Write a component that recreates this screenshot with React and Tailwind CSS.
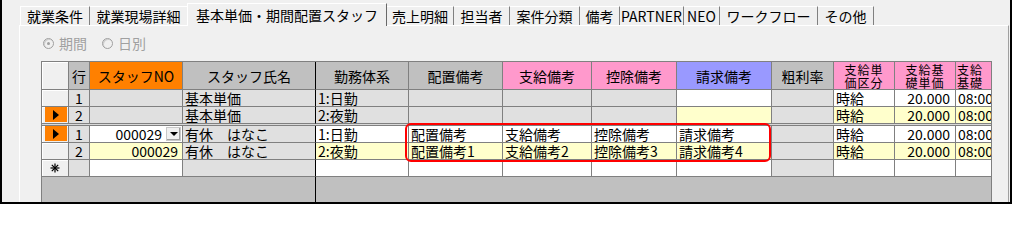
import React from 'react';

const FONT = { fontFamily: '"Noto Sans CJK JP", "Noto Sans", sans-serif' };

const tabs = [
  { label: '就業条件', w: 'w-[70px]', first: true },
  { label: '就業現場詳細', w: 'w-[97px]', noSep: true },
  { label: '基本単価・期間配置スタッフ', w: 'w-[200px]', active: true },
  { label: '売上明細', w: 'w-[67px]' },
  { label: '担当者', w: 'w-[56px]' },
  { label: '案件分類', w: 'w-[70px]' },
  { label: '備考', w: 'w-[40px]' },
  { label: 'PARTNER', w: 'w-[64px]' },
  { label: 'NEO', w: 'w-[36px]' },
  { label: 'ワークフロー', w: 'w-[98px]' },
  { label: 'その他', w: 'w-[56px]' },
];

// column widths include the right grid line
const cols = [
  { key: 'sel', w: 'w-[27px]', head: '', hb: 'bg-[#f0f0f0]' },
  { key: 'gyo', w: 'w-[21px]', head: '行', hb: 'bg-[#c0c0c0]', align: 'center' },
  { key: 'no', w: 'w-[93px]', head: 'スタッフNO', hb: 'bg-[#ff8000]', align: 'right' },
  { key: 'name', w: 'w-[133px]', head: 'スタッフ氏名', hb: 'bg-[#c0c0c0]', frozen: true },
  { key: 'kinmu', w: 'w-[93px]', head: '勤務体系', hb: 'bg-[#c0c0c0]' },
  { key: 'haichi', w: 'w-[94px]', head: '配置備考', hb: 'bg-[#c0c0c0]' },
  { key: 'shikyu', w: 'w-[89px]', head: '支給備考', hb: 'bg-[#ff99cc]' },
  { key: 'kojo', w: 'w-[85px]', head: '控除備考', hb: 'bg-[#ff99cc]' },
  { key: 'seikyu', w: 'w-[95px]', head: '請求備考', hb: 'bg-[#9999ff]' },
  { key: 'arari', w: 'w-[62px]', head: '粗利率', hb: 'bg-[#c0c0c0]' },
  { key: 'kubun', w: 'w-[61px]', head: ['支給単', '価区分'], hb: 'bg-[#ff99cc]' },
  { key: 'tanka', w: 'w-[61px]', head: ['支給基', '礎単価'], hb: 'bg-[#ff99cc]', align: 'right' },
  { key: 'jikan', w: 'w-[60px]', head: ['支給', '基礎'], hb: 'bg-[#ff99cc]', headLeft: true },
];

const G = 'bg-[#e0e0e0]';
const W = 'bg-white';
const Y = 'bg-[#ffffcc]';

const rows = [
  {
    sel: 'none',
    cells: [['1', G], ['', G], ['基本単価', G], ['1:日勤', G], ['', G], ['', G], ['', G], ['', W], ['', G], ['時給', W], ['20.000', W], ['08:00', W]],
  },
  {
    sel: 'mark',
    cells: [['2', G], ['', G], ['基本単価', G], ['2:夜勤', G], ['', G], ['', G], ['', G], ['', Y], ['', G], ['時給', Y], ['20.000', Y], ['08:00', Y]],
    sepAfter: true,
  },
  {
    sel: 'mark',
    combo: true,
    cells: [['1', G], ['000029', W], ['有休　はなこ', G], ['1:日勤', W], ['配置備考', W], ['支給備考', W], ['控除備考', W], ['請求備考', W], ['', G], ['時給', W], ['20.000', W], ['08:00', W]],
  },
  {
    sel: 'none',
    cells: [['2', G], ['000029', Y], ['有休　はなこ', G], ['2:夜勤', Y], ['配置備考1', Y], ['支給備考2', Y], ['控除備考3', Y], ['請求備考4', Y], ['', G], ['時給', Y], ['20.000', Y], ['08:00', Y]],
  },
  {
    sel: 'new',
    cells: [['', G], ['', W], ['', G], ['', W], ['', W], ['', W], ['', W], ['', W], ['', G], ['', W], ['', W], ['', W]],
  },
];

function Tab({ tab }) {
  if (tab.active) {
    return (
      <div className={`${tab.w} h-[23px] -mb-px relative z-10 shrink-0 bg-[#f0f0f0] border-l border-t border-white border-r border-r-[#696969] flex justify-center pt-[3px] text-[14px] leading-[16px] text-black`}>
        {tab.label}
      </div>
    );
  }
  return (
    <div
      className={`${tab.w} h-[19px] shrink-0 bg-[#f0f0f0] border-t border-white flex justify-center items-center text-[14px] leading-[16px] text-black ${tab.first ? 'border-l' : ''} ${tab.noSep ? '' : 'border-r border-r-[#808080]'}`}
    >
      {tab.label}
    </div>
  );
}

function Radio({ checked, label }) {
  return (
    <div className="flex items-center gap-[5px]">
      <div className="w-[11px] h-[11px] rounded-full border border-[#a0a0a0] bg-[#f0f0f0] shadow-[inset_1px_1px_0_#d0d0d0] flex items-center justify-center">
        {checked && <div className="w-[3px] h-[3px] rounded-full bg-[#a0a0a0]" />}
      </div>
      <span className="text-[14px] leading-[16px] text-[#a0a0a0]">{label}</span>
    </div>
  );
}

function Selector({ kind, header }) {
  const base = 'w-[27px] shrink-0 h-full border-r border-b border-[#808080] bg-[#f0f0f0] shadow-[inset_1px_1px_0_#ffffff] flex';
  if (header) return <div className={base} />;
  if (kind === 'mark') {
    return (
      <div className={base}>
        <div className="flex-1 ml-[3px] mr-[1px] mb-[1px] bg-[#ff8000] flex items-center justify-center">
          <div className="w-0 h-0 border-y-[5px] border-y-transparent border-l-[6px] border-l-black" />
        </div>
      </div>
    );
  }
  if (kind === 'new') {
    return (
      <div className={`${base} items-center justify-center`}>
        <svg width="10" height="10" viewBox="0 0 10 10" stroke="black" strokeWidth="1.2">
          <line x1="5" y1="0.5" x2="5" y2="9.5" />
          <line x1="0.5" y1="5" x2="9.5" y2="5" />
          <line x1="1.8" y1="1.8" x2="8.2" y2="8.2" />
          <line x1="8.2" y1="1.8" x2="1.8" y2="8.2" />
        </svg>
      </div>
    );
  }
  return <div className={base} />;
}

function HeaderRow() {
  return (
    <div className="flex h-[28px] shrink-0">
      {cols.map((c) => {
        if (c.key === 'sel') return <Selector key={c.key} header />;
        const border = c.frozen ? 'border-r-black' : 'border-r-[#808080]';
        const two = Array.isArray(c.head);
        return (
          <div
            key={c.key}
            className={`${c.w} ${c.hb} shrink-0 h-full border-r ${border} border-b border-b-[#808080] flex flex-col justify-center overflow-hidden whitespace-nowrap text-black ${c.headLeft ? 'items-start pl-[1px]' : 'items-center'} ${two ? 'text-[12px] leading-[13px]' : 'text-[14px] leading-[16px]'}`}
          >
            {two ? c.head.map((l) => <span key={l} className="tracking-[1px]">{l}</span>) : c.head}
          </div>
        );
      })}
    </div>
  );
}

function DataRow({ row }) {
  return (
    <div className="flex h-[17px] shrink-0">
      <Selector kind={row.sel} />
      {row.cells.map(([text, bg], i) => {
        const c = cols[i + 1];
        const border = c.frozen ? 'border-r-black' : 'border-r-[#808080]';
        let justify = 'justify-start pl-[2px]';
        if (c.align === 'center') justify = 'justify-center';
        if (c.align === 'right') justify = c.key === 'tanka' ? 'justify-end pr-[5px]' : 'justify-end pr-[4px]';
        if (c.key === 'no' && row.combo) {
          return (
            <div key={c.key} className={`${c.w} ${bg} shrink-0 h-full border-r ${border} border-b border-b-[#808080] flex items-center justify-end pr-[1px]`}>
              <span className="text-[14px] leading-[16px] text-black">{text}</span>
              <div className="ml-[4px] w-[15px] h-[14px] bg-[#f0f0f0] border border-[#c8c8c8] shadow-[inset_-1px_-1px_0_#a0a0a0] flex flex-col items-center justify-center">
                <div className="w-0 h-0 border-x-[4px] border-x-transparent border-t-[4px] border-t-black" />
              </div>
            </div>
          );
        }
        return (
          <div
            key={c.key}
            className={`${c.w} ${bg} shrink-0 h-full border-r ${border} border-b border-b-[#808080] flex items-center ${justify} overflow-hidden whitespace-nowrap text-[14px] leading-[16px] text-black`}
          >
            {text}
          </div>
        );
      })}
    </div>
  );
}

export default function App() {
  return (
    <div className="w-[1024px] h-[205px] bg-white overflow-hidden" style={FONT}>
      <div className="w-[1012px] h-[204px] border-x-2 border-b-2 border-black bg-[#f0f0f0] flex flex-col overflow-hidden">
        {/* tab strip */}
        <div className="flex items-end h-[25px] pl-[18px] shrink-0">
          {tabs.map((t) => (
            <Tab key={t.label} tab={t} />
          ))}
        </div>

        {/* tab page */}
        <div className="ml-[17px] w-[990px] flex-1 min-h-0 border-l border-t border-white border-r border-r-[#a0a0a0] bg-[#f0f0f0] flex flex-col pl-[21px] pt-[10px]">
          <div className="flex items-center h-[14px] pl-[2px] gap-[15px] shrink-0">
            <Radio checked label="期間" />
            <Radio label="日別" />
          </div>

          {/* grid */}
          <div className="relative mt-[11px] w-[951px] flex-1 min-h-0 border-l border-t border-r border-[#808080] bg-[#c0c0c0] flex flex-col overflow-hidden">
            <HeaderRow />
            {rows.map((r, i) => (
              <React.Fragment key={i}>
                <DataRow row={r} />
                {r.sepAfter && <div className="h-[2px] shrink-0 bg-[#d8d8d8] border-b border-[#808080]" />}
              </React.Fragment>
            ))}
            <div className="flex flex-1">
              <div className="w-[274px] shrink-0 border-r border-black" />
            </div>

            {/* highlight */}
            <div className="absolute left-[363px] top-[61px] w-[366px] h-[39px] border-2 border-[#ff0000] rounded-[6px] pointer-events-none" />
          </div>
        </div>
      </div>
    </div>
  );
}
